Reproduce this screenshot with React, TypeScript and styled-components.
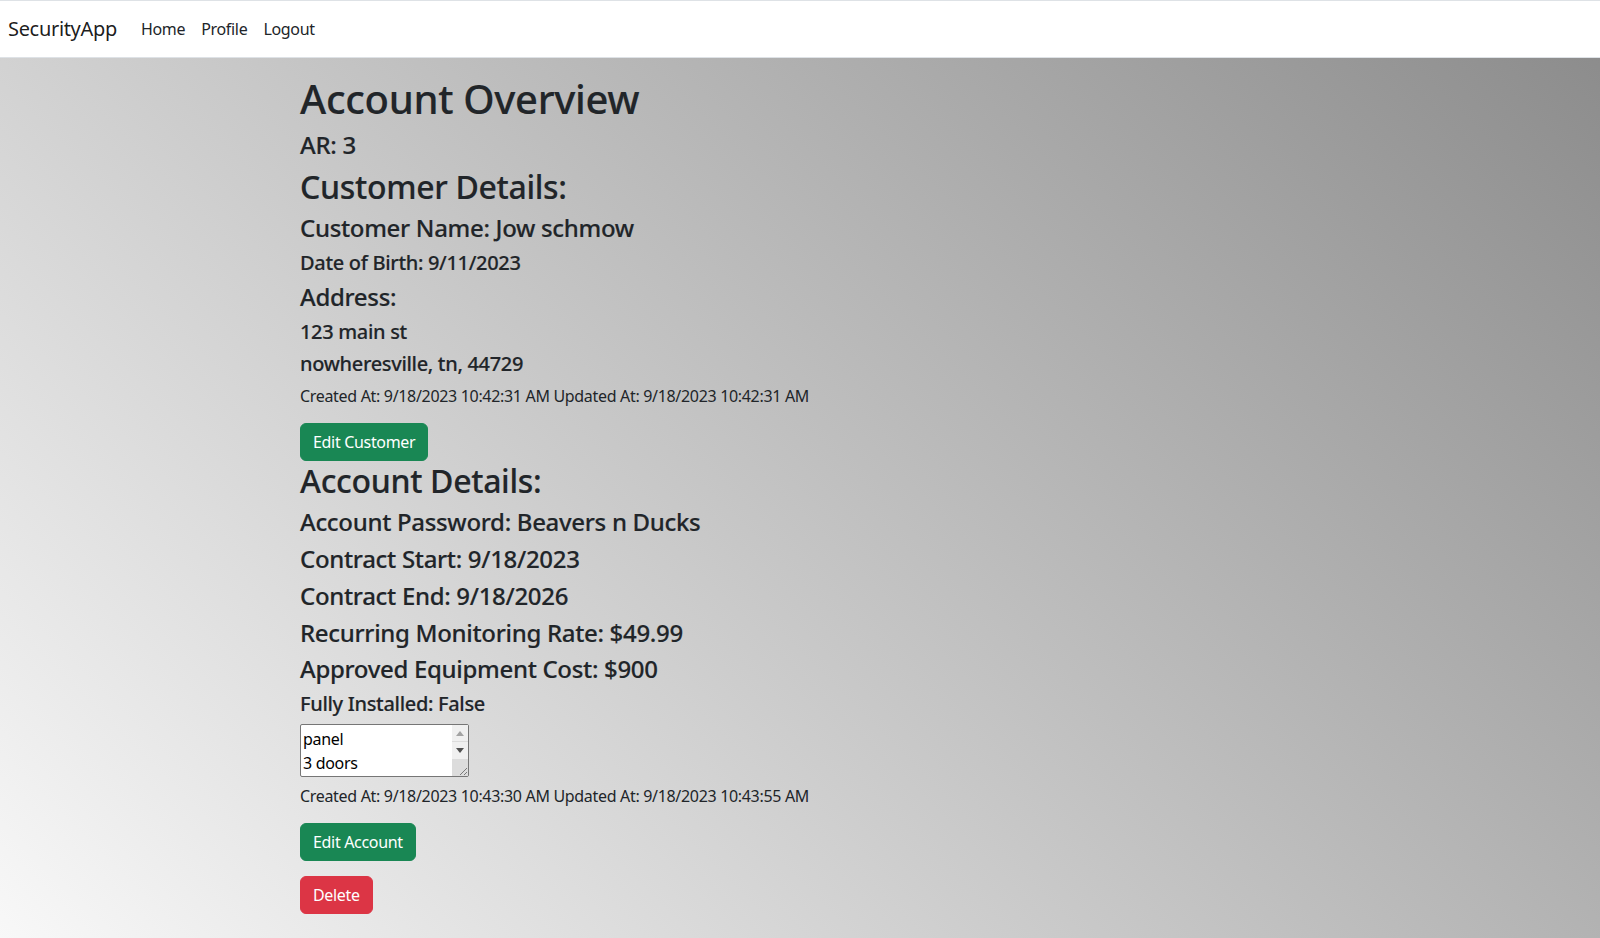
import React from "react";
import styled, { createGlobalStyle } from "styled-components";

const GlobalStyle = createGlobalStyle`
  *, *::before, *::after { box-sizing: border-box; }
  html {
    min-height: 100%;
    background: linear-gradient(45deg, #f8f8f8 0%, #8a8a8a 100%);
  }
  body {
    margin: 0;
    font-family: "Segoe UI", "Noto Sans", "Open Sans", sans-serif;
    font-size: 16px;
    line-height: 1.5;
    letter-spacing: -0.02em;
    color: #212529;
  }
`;

const Navbar = styled.nav`
  display: flex;
  align-items: center;
  background: #ffffff;
  border-top: 1px solid #dee2e6;
  border-bottom: 1px solid #dee2e6;
  padding: 8px 8px;
`;

const Brand = styled.a`
  font-size: 20px;
  line-height: 30px;
  padding: 5px 0;
  margin-right: 16px;
  color: rgba(0, 0, 0, 0.9);
  text-decoration: none;
`;

const NavList = styled.ul`
  display: flex;
  list-style: none;
  margin: 0;
  padding: 0;
`;

const NavLink = styled.a`
  display: block;
  padding: 8px 8px;
  color: #212529;
  text-decoration: none;
  font-size: 16px;
`;

const Container = styled.main`
  max-width: 1000px;
  margin: 0 auto;
  padding-top: 17px;
  padding-bottom: 24px;
`;

const Heading = styled.div<{ $size: number }>`
  font-size: ${(p) => p.$size}px;
  font-weight: 500;
  -webkit-text-stroke: 0.15px currentColor;
  line-height: 1.2;
  margin: 0 0 8px;
`;

const Meta = styled.p`
  margin: 0 0 15px;
  font-size: 16px;
  line-height: 24px;
`;

const Button = styled.button<{ $variant: "success" | "danger" }>`
  display: inline-block;
  font-family: inherit;
  letter-spacing: inherit;
  font-size: 16px;
  line-height: 24px;
  padding: 6px 12px;
  border-radius: 6px;
  border: 1px solid ${(p) => (p.$variant === "success" ? "#198754" : "#dc3545")};
  background: ${(p) => (p.$variant === "success" ? "#198754" : "#dc3545")};
  color: #ffffff;
  cursor: pointer;
`;

const ButtonRow = styled.div<{ $gap: number }>`
  margin-bottom: ${(p) => p.$gap}px;
  line-height: 0;
`;

const EquipmentBox = styled.div`
  position: relative;
  width: 169px;
  height: 53px;
  margin: 0 0 7px;
`;

const Equipment = styled.textarea`
  display: block;
  width: 100%;
  height: 100%;
  padding: 2px 18px 2px 2px;
  font-family: inherit;
  letter-spacing: inherit;
  font-size: 16px;
  line-height: 24px;
  color: #000;
  background: #fff;
  border: 1px solid #767676;
  border-radius: 2px;
  overflow: hidden;
  resize: none;
`;

const ScrollBar = styled.div`
  position: absolute;
  top: 1px;
  right: 1px;
  bottom: 1px;
  width: 16px;
  display: flex;
  flex-direction: column;
  background: #f0f0f0;
`;

const ScrollButton = styled.div<{ $divider?: boolean }>`
  height: 17px;
  display: flex;
  align-items: center;
  justify-content: center;
  border-bottom: ${(p) => (p.$divider ? "1px solid #dcdcdc" : "none")};
`;

const Resizer = styled.div`
  flex: 1;
  background: #dcdcdc;
  display: flex;
  align-items: flex-end;
  justify-content: flex-end;
`;

export default function App() {
  return (
    <>
      <GlobalStyle />
      <Navbar>
        <Brand href="#">SecurityApp</Brand>
        <NavList>
          <li><NavLink href="#">Home</NavLink></li>
          <li><NavLink href="#">Profile</NavLink></li>
          <li><NavLink href="#">Logout</NavLink></li>
        </NavList>
      </Navbar>
      <Container>
        <Heading as="h1" $size={40}>Account Overview</Heading>
        <Heading as="h4" $size={24}>AR: 3</Heading>
        <Heading as="h2" $size={32}>Customer Details:</Heading>
        <Heading as="h4" $size={24}>Customer Name: Jow schmow</Heading>
        <Heading as="h5" $size={20}>Date of Birth: 9/11/2023</Heading>
        <Heading as="h4" $size={24}>Address:</Heading>
        <Heading as="h5" $size={20}>123 main st</Heading>
        <Heading as="h5" $size={20}>nowheresville, tn, 44729</Heading>
        <Meta>Created At: 9/18/2023 10:42:31 AM Updated At: 9/18/2023 10:42:31 AM</Meta>
        <ButtonRow $gap={1}>
          <Button $variant="success">Edit Customer</Button>
        </ButtonRow>
        <Heading as="h2" $size={32}>Account Details:</Heading>
        <Heading as="h4" $size={24}>Account Password: Beavers n Ducks</Heading>
        <Heading as="h4" $size={24}>Contract Start: 9/18/2023</Heading>
        <Heading as="h4" $size={24}>Contract End: 9/18/2026</Heading>
        <Heading as="h4" $size={24}>Recurring Monitoring Rate: $49.99</Heading>
        <Heading as="h4" $size={24}>Approved Equipment Cost: $900</Heading>
        <Heading as="h5" $size={20}>Fully Installed: False</Heading>
        <EquipmentBox>
          <Equipment readOnly defaultValue={"panel\n3 doors"} />
          <ScrollBar>
            <ScrollButton $divider>
              <svg width="8" height="5" viewBox="0 0 8 5"><path d="M0 5 L4 0 L8 5 Z" fill="#a3a3a3" /></svg>
            </ScrollButton>
            <ScrollButton>
              <svg width="8" height="5" viewBox="0 0 8 5"><path d="M0 0 L8 0 L4 5 Z" fill="#505050" /></svg>
            </ScrollButton>
            <Resizer>
              <svg width="10" height="10" viewBox="0 0 10 10">
                <path d="M9 2 L2 9 M9 6 L6 9" stroke="#7a7a7a" strokeWidth="1" />
              </svg>
            </Resizer>
          </ScrollBar>
        </EquipmentBox>
        <Meta>Created At: 9/18/2023 10:43:30 AM Updated At: 9/18/2023 10:43:55 AM</Meta>
        <ButtonRow $gap={15}>
          <Button $variant="success">Edit Account</Button>
        </ButtonRow>
        <ButtonRow $gap={0}>
          <Button $variant="danger">Delete</Button>
        </ButtonRow>
      </Container>
    </>
  );
}
